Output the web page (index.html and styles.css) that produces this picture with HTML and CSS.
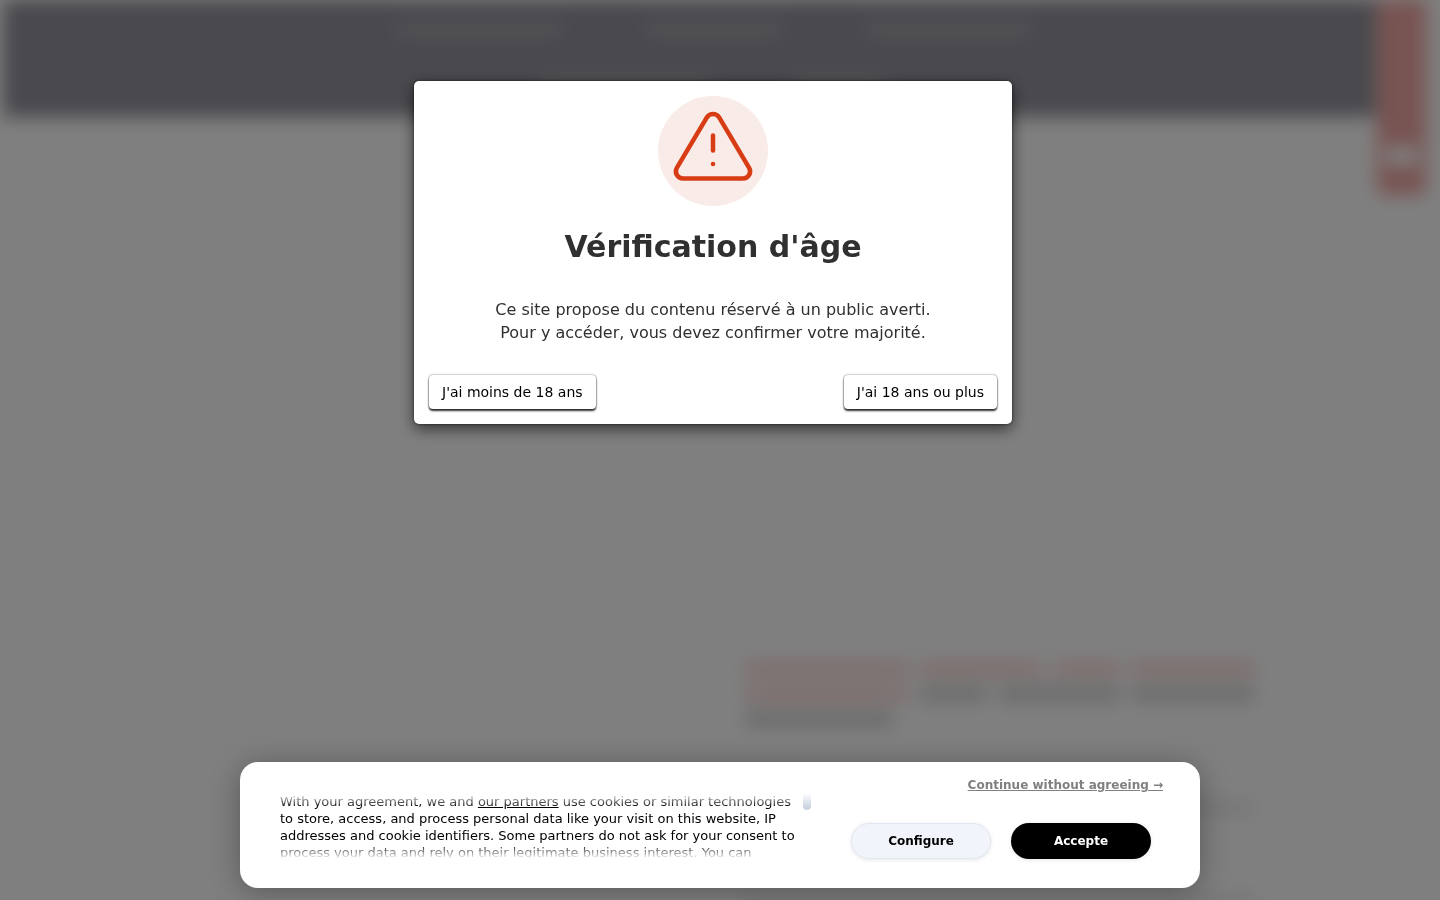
FILE: index.html
```
<!DOCTYPE html>
<html lang="fr">
<head>
    <meta charset="UTF-8">
    <meta name="viewport" content="width=device-width, initial-scale=1.0">
    <title>Vérification d'âge</title>
    <link rel="stylesheet" href="styles.css">
</head>
<body>
    <!-- Page floutée derrière la vérification -->
    <div class="page" aria-hidden="true">
        <div class="header">
            <div class="nav-row">
                <span class="nav-item wide"></span>
                <span class="nav-item"></span>
                <span class="nav-item wide"></span>
            </div>
            <div class="nav-row">
                <span class="nav-item wide"></span>
                <span class="nav-item small"></span>
            </div>
        </div>
        <div class="side-tab"><span></span></div>
        <div class="article">
            <div class="line">
                <span class="red w-l"></span>
                <span class="red w-m"></span>
                <span class="red w-s"></span>
                <span class="red w-m"></span>
            </div>
            <div class="line">
                <span class="red w-l"></span>
                <span class="dark w-s first"></span>
                <span class="dark w-m"></span>
                <span class="dark w-m"></span>
            </div>
            <div class="line">
                <span class="dark w-end"></span>
            </div>
            <div class="line text"><span class="dark w-full"></span></div>
            <div class="line text"><span class="dark w-full"></span></div>
        </div>
    </div>

    <!-- Fenêtre de vérification d'âge -->
    <div class="overlay">
        <div class="modal" role="dialog" aria-modal="true" aria-labelledby="age-title">
            <div class="icon">
                <svg viewBox="0 0 24 24" width="90" height="90" fill="none" stroke="#d83c14" stroke-width="1.2" stroke-linecap="round" stroke-linejoin="round" aria-hidden="true">
                    <path d="M12 8.4v4"/>
                    <path d="M10.363 3.591l-8.006 13.434a1.914 1.914 0 0 0 1.636 2.871h16.014a1.914 1.914 0 0 0 1.636 -2.87l-8.006 -13.436a1.914 1.914 0 0 0 -3.274 0z"/>
                    <path d="M12 16h.01"/>
                </svg>
            </div>
            <h1 id="age-title">Vérification d'âge</h1>
            <p>Ce site propose du contenu réservé à un public averti.<br>Pour y accéder, vous devez confirmer votre majorité.</p>
            <div class="modal-buttons">
                <button type="button">J'ai moins de 18 ans</button>
                <button type="button">J'ai 18 ans ou plus</button>
            </div>
        </div>
    </div>

    <!-- Bandeau cookies -->
    <div class="cookies" role="region" aria-label="Cookies">
        <div class="cookies-text">
            <p>With your agreement, we and <a href="#">our partners</a> use cookies or similar technologies to store, access, and process personal data like your visit on this website, IP addresses and cookie identifiers. Some partners do not ask for your consent to process your data and rely on their legitimate business interest. You can</p>
            <span class="thumb"></span>
        </div>
        <div class="cookies-actions">
            <a href="#" class="skip">Continue without agreeing →</a>
            <div class="cookies-buttons">
                <button type="button" class="configure">Configure</button>
                <button type="button" class="accept">Accepte</button>
            </div>
        </div>
    </div>
</body>
</html>
```
FILE: styles.css
```
* {
    box-sizing: border-box;
}

body {
    font-family: "DejaVu Sans", sans-serif;
    background-color: #fff;
    margin: 0;
    overflow: hidden;
}

/* Page floutée */
.page {
    position: relative;
    min-height: 100vh;
    padding-right: 64px;
    filter: blur(9px);
}

.header {
    background-color: #94929c;
    height: 117px;
    margin-left: 3px;
    padding-top: 22px;
}

.nav-row {
    display: flex;
    justify-content: center;
    gap: 84px;
    padding-left: 48px;
    margin-bottom: 36px;
}

.nav-item {
    width: 136px;
    height: 16px;
    background-color: #a4a2a8;
}

.nav-item.wide {
    width: 166px;
}

.nav-item.small {
    width: 90px;
}

/* Onglet rouge à droite */
.side-tab {
    position: absolute;
    top: 0;
    right: 14px;
    width: 49px;
    height: 195px;
    padding-top: 146px;
    background-color: #f0a8a4;
    border-radius: 0 0 8px 8px;
}

.side-tab span {
    display: block;
    height: 20px;
    margin: 0 8px;
    background-color: #fff;
}

.article {
    width: 37%;
    margin-left: 745px;
    padding-top: 544px;
}

.line {
    display: flex;
    gap: 12px;
    height: 25px;
}

.line span {
    height: 16px;
}

.red {
    background-color: #fcdcda;
}

.dark {
    background-color: #d6d6d6;
}

.w-l {
    width: 166px;
}

.w-m {
    width: 124px;
}

.w-s {
    width: 68px;
}

.w-end {
    width: 148px;
}

.w-full {
    width: 100%;
}

.text {
    margin-top: 67px;
}

.text .dark {
    height: 10px;
    background-color: #e6e6e6;
}

/* Fenêtre */
.overlay {
    position: fixed;
    inset: 0;
    display: flex;
    justify-content: center;
    align-items: flex-start;
    padding: 81px 14px 0 0;
    background-color: rgba(0, 0, 0, 0.5);
}

.modal {
    width: 598px;
    max-width: 90%;
    padding: 15px;
    background-color: #fff;
    border-radius: 5px;
    box-shadow: 0 5px 15px rgba(0, 0, 0, 0.6), 0 0 3px rgba(0, 0, 0, 0.6);
    color: #303030;
    text-align: center;
}

.icon {
    width: 110px;
    height: 110px;
    margin: 0 auto;
    padding: 8px 10px;
    background-color: #f9ebe8;
    border-radius: 50%;
}

.icon svg {
    display: block;
}

h1 {
    margin: 23px 0 33px;
    font-size: 30px;
    line-height: 36px;
}

.modal p {
    margin: 0 0 31px;
    font-size: 16px;
    line-height: 23px;
}

.modal-buttons {
    display: flex;
    justify-content: space-between;
}

button {
    font-family: inherit;
    cursor: pointer;
}

.modal-buttons button {
    height: 34px;
    padding: 0 13px;
    background-color: #fff;
    border: none;
    border-radius: 4px;
    box-shadow: 0 2px 2px rgba(0, 0, 0, 0.8), 0 0 2px rgba(0, 0, 0, 0.6);
    color: #000;
    font-size: 14px;
}

/* Bandeau cookies */
.cookies {
    position: fixed;
    bottom: 12px;
    left: 50%;
    transform: translateX(-50%);
    display: flex;
    justify-content: space-between;
    width: 960px;
    max-width: 100%;
    height: 126px;
    padding: 14px 37px 29px 40px;
    background-color: #fff;
    border-radius: 18px;
    box-shadow: 0 4px 30px rgba(0, 0, 0, 0.3);
    color: #000;
}

.cookies-text {
    display: flex;
    justify-content: space-between;
    width: 531px;
    height: 68px;
    margin-top: 17px;
    overflow: hidden;
    -webkit-mask-image: linear-gradient(transparent, #000 14px, #000 50px, transparent 66px);
    mask-image: linear-gradient(transparent, #000 14px, #000 50px, transparent 66px);
}

.cookies-text p {
    width: 518px;
    margin: 0;
    font-size: 13px;
    line-height: 17px;
}

.cookies-text a {
    color: #000;
}

.thumb {
    width: 8px;
    height: 17px;
    background-color: #cbd5e1;
    border-radius: 4px;
}

.cookies-actions {
    display: flex;
    flex-direction: column;
    align-items: flex-end;
    justify-content: space-between;
}

.skip {
    color: #808080;
    font-size: 12px;
    font-weight: bold;
    line-height: 18px;
}

.cookies-buttons {
    display: flex;
    gap: 20px;
    margin-right: 12px;
}

.cookies-buttons button {
    width: 140px;
    height: 36px;
    border: none;
    border-radius: 18px;
    box-shadow: 0 1px 4px rgba(0, 0, 0, 0.1);
    font-size: 12px;
    font-weight: bold;
}

.cookies-buttons .configure {
    background-color: #f1f5fb;
    border: 1px solid #e2e8f0;
    color: #000;
}

.cookies-buttons .accept {
    background-color: #000;
    color: #fff;
}
```
